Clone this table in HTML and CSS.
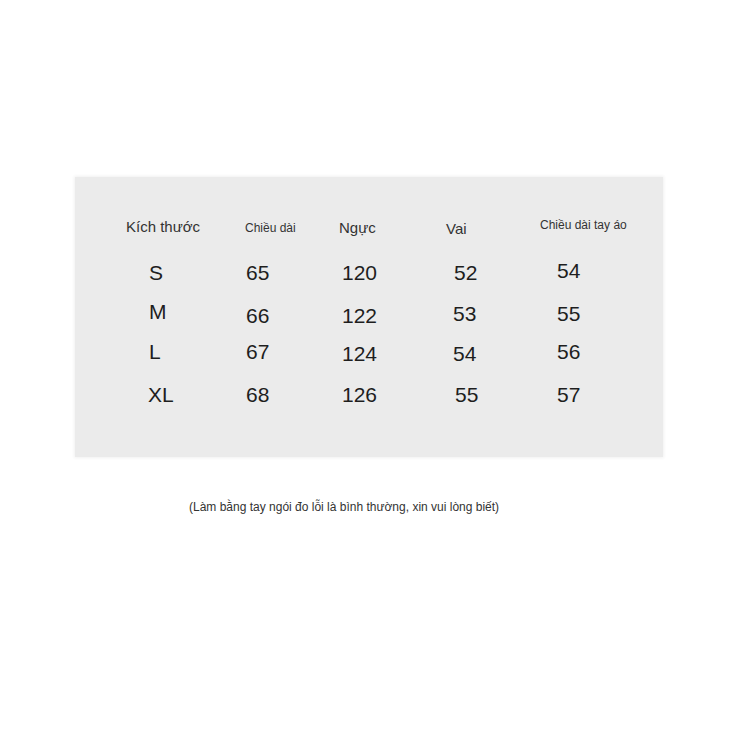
FILE: index.html
```html
<!DOCTYPE html>
<html lang="vi">
<head>
<meta charset="utf-8">
<title>Bảng kích thước</title>
<link rel="stylesheet" href="styles.css">
</head>
<body>
<div class="page">
  <div class="chart">
    <div class="head">
      <div class="h h-lg">Kích thước</div>
      <div class="h h-sm dn1">Chiều dài</div>
      <div class="h h-lg dn1">Ngực</div>
      <div class="h h-lg dn2">Vai</div>
      <div class="h h-sm up2">Chiều dài tay áo</div>
    </div>
    <div class="body">
      <div class="v">S</div><div class="v">65</div><div class="v">120</div><div class="v">52</div><div class="v up2">54</div>
      <div class="v up2">M</div><div class="v dn2">66</div><div class="v dn2">122</div><div class="v l1">53</div><div class="v">55</div>
      <div class="v">L</div><div class="v">67</div><div class="v dn2">124</div><div class="v dn2 l1">54</div><div class="v">56</div>
      <div class="v l1">XL</div><div class="v">68</div><div class="v">126</div><div class="v r1">55</div><div class="v">57</div>
    </div>
  </div>
  <p class="note">(Làm bằng tay ngói đo lỗi là bình thường, xin vui lòng biết)</p>
</div>
</body>
</html>
```

FILE: styles.css
```css
html, body {
  margin: 0;
  padding: 0;
  background: #ffffff;
}
body {
  font-family: "Liberation Sans", Arial, sans-serif;
  color: #222222;
}
.page {
  padding-top: 177px;
  padding-left: 75px;
}
.chart {
  width: 588px;
  height: 280px;
  box-sizing: border-box;
  background: #ebebeb;
  box-shadow: 0 0 3px 1px #f1f1f1;
  padding-top: 38px;
}
.head {
  display: grid;
  grid-template-columns: 119px 94px 107px 94px auto;
  padding-left: 51px;
  height: 20px;
  align-items: center;
}
.h {
  color: #333333;
  line-height: 20px;
  white-space: nowrap;
}
.h-lg { font-size: 15px; }
.h-sm { font-size: 12px; }
.body {
  display: grid;
  grid-template-columns: 97px 96px 112px 103px auto;
  grid-template-rows: 40px 42px 34px 52px;
  align-items: center;
  padding-left: 74px;
  margin-top: 18px;
}
.v {
  font-size: 21px;
  line-height: 24px;
  color: #1e1e1e;
}
.dn1 { margin-top: 2px; }
.dn2 { margin-top: 4px; }
.up2 { margin-top: -4px; }
.l1 { margin-left: -1px; }
.r1 { margin-left: 1px; }
.note {
  margin: 43px 0 0 114px;
  font-size: 12px;
  line-height: 14px;
  color: #333333;
}
```
